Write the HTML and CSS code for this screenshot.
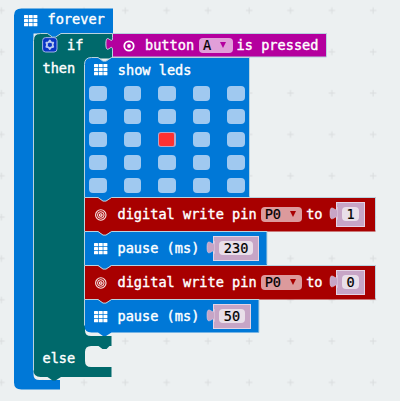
FILE: index.html
```html
<!DOCTYPE html>
<html lang="en">
<head>
<meta charset="utf-8">
<title>Block editor</title>
<link rel="stylesheet" href="styles.css">
</head>
<body>
<svg class="defs" width="0" height="0" aria-hidden="true">
  <defs>
    <g id="grid-icon" fill="#fff">
      <rect x="0" y="0" width="4" height="3.2" rx=".5"/><rect x="4.7" y="0" width="4" height="3.2" rx=".5"/><rect x="9.4" y="0" width="4" height="3.2" rx=".5"/>
      <rect x="0" y="4" width="4" height="3.2" rx=".5"/><rect x="4.7" y="4" width="4" height="3.2" rx=".5"/><rect x="9.4" y="4" width="4" height="3.2" rx=".5"/>
      <rect x="0" y="8" width="4" height="3.2" rx=".5"/><rect x="4.7" y="8" width="4" height="3.2" rx=".5"/><rect x="9.4" y="8" width="4" height="3.2" rx=".5"/>
    </g>
    <g id="pin-icon" fill="none" stroke="#fff">
      <circle cx="6" cy="6" r="5.2" stroke-width="1.1" opacity=".9"/><circle cx="6" cy="6" r="3.3" stroke-width="1" opacity=".9"/><circle cx="6" cy="6" r="1.3" stroke-width="1.1"/>
    </g>
    <path id="plug" d="M8.500 4.200C8.500 12.500 1 -2.400 1 10.400S8.500 8.300 8.500 16.600Z"/>
    <pattern id="crosses" x="-19.4" y="-10.2" width="41.3" height="41.33" patternUnits="userSpaceOnUse">
      <path d="M17.5 20.7H24.1M20.8 17.4V24" stroke="#d9dcde" stroke-width="1"/>
    </pattern>
  </defs>
</svg>
<main class="workspace">
  <svg class="backdrop" width="400" height="401"><rect width="400" height="401" fill="url(#crosses)"/></svg>

  <section class="block forever">
    <svg class="shape"><path fill="#0078d7" d="M-.5 7Q-.5 0 7 0H98.500V25H19V366Q19 371.500 25 371.500H45.500V381H7Q-.5 381 -.5 374Z"/></svg>
    <header class="row forever-head">
      <svg class="icon" width="14" height="12"><use href="#grid-icon"/></svg>
      <span class="label">forever</span>
    </header>

    <section class="block if">
      <svg class="shape">
        <path fill="#0078d7" d="M7 -1H79V5H7Z"/>
        <path fill="#00696b" d="M0 7Q0 0 7 0H14L19 3.600H22L27.500 0H79V4.200C79 12.500 72.400 -2.100 72.400 10.400S79 8.300 79 16.600V25H57Q51.500 25 51.500 31V297Q51.500 302.500 57.500 302.500H78V312.500H76L73 315.500H69L65 312.500H57.500Q51.500 312.500 51.500 318.500V327.500Q51.500 333.500 57.500 333.500H78V343.500H27.500L22 347H19L14 343.500H7Q0 343.500 0 337Z"/>
        <path class="edge" d="M0 337V7Q0 0 7 0H14L19 3.600H22L27.500 0H79"/>
      </svg>
      <header class="row if-head">
        <svg class="gear" width="16" height="16" viewBox="0 0 16 16">
          <rect x=".6" y=".6" width="14.400" height="14.400" rx="3" fill="#0a35c6" stroke="#9fb4e6"/>
          <path fill="none" stroke="#b9c9ef" stroke-width="1.900" stroke-linejoin="round" d="M7.800 3.600L9 5.400L11.200 5.700L10.500 7.800L11.200 9.900L9 10.200L7.800 12L6.600 10.200L4.400 9.900L5.100 7.800L4.400 5.700L6.600 5.400Z"/>
          <circle cx="7.800" cy="7.800" r="1.900" fill="#0a35c6"/>
        </svg>
        <span class="label">if</span>
        <div class="condition">
          <svg class="shape"><path fill="#b4009e" d="M0 0H214V23.500H0V16.600C0 8.300 -6.600 22.900 -6.600 10.400S0 12.500 0 4.200Z"/><path class="edge" d="M214 0V23.500H0V16.600C0 8.300 -6.600 22.900 -6.600 10.400S0 12.500 0 4.200V0H214"/></svg>
          <svg class="icon" width="12" height="12"><circle cx="6" cy="6" r="4.700" fill="none" stroke="#fff" stroke-width="1.800"/><circle cx="6" cy="6" r="1.900" fill="#fff"/></svg>
          <span class="label">button</span>
          <span class="pick pick-button">A<i></i></span>
          <span class="label">is pressed</span>
        </div>
      </header>

      <div class="branch">
        <span class="label branch-name">then</span>
        <div class="stack">
          <section class="block leds">
            <svg class="shape"><path fill="#0078d7" d="M0 7Q0 0 7 0H13.500L18.500 3.600H21.500L27 0H165V140H27L21.500 143.500H18.500L13.500 140H0Z"/><path class="edge" d="M0 140V7Q0 0 7 0H13.500L18.500 3.600H21.500L27 0H165V139"/></svg>
            <header class="row"><svg class="icon" width="14" height="12"><use href="#grid-icon"/></svg><span class="label">show leds</span></header>
            <div class="matrix">
              <b></b><b></b><b></b><b></b><b></b>
              <b></b><b></b><b></b><b></b><b></b>
              <b></b><b></b><b class="on"></b><b></b><b></b>
              <b></b><b></b><b></b><b></b><b></b>
              <b></b><b></b><b></b><b></b><b></b>
            </div>
          </section>

          <section class="block row write">
            <svg class="shape"><path fill="#a80000" d="M0 0H13.500L18.500 3.600H21.500L27 0H291V34H27L21.500 37.500H18.500L13.500 34H0Z"/><path class="edge" d="M0 34V0H13.500L18.500 3.600H21.500L27 0H291V33"/></svg>
            <svg class="icon" width="14" height="12"><use href="#pin-icon" x=".8"/></svg>
            <span class="label">digital write pin</span>
            <span class="pick pick-pin">P0<i></i></span>
            <span class="label">to</span>
            <span class="value"><svg class="plug" width="9" height="22"><use href="#plug"/></svg><em>1</em></span>
          </section>

          <section class="block row pause">
            <svg class="shape"><path fill="#0078d7" d="M0 0H13.500L18.500 3.600H21.500L27 0H182.500V33.500H27L21.500 37.500H18.500L13.500 33.500H0Z"/><path class="edge" d="M0 34V0H13.500L18.500 3.600H21.500L27 0H182.500V33"/></svg>
            <svg class="icon" width="14" height="12"><use href="#grid-icon"/></svg>
            <span class="label">pause (ms)</span>
            <span class="value"><svg class="plug" width="9" height="22"><use href="#plug"/></svg><em>230</em></span>
          </section>

          <section class="block row write">
            <svg class="shape"><path fill="#a80000" d="M0 0H13.500L18.500 3.600H21.500L27 0H291V34H27L21.500 37.500H18.500L13.500 34H0Z"/><path class="edge" d="M0 34V0H13.500L18.500 3.600H21.500L27 0H291V33"/></svg>
            <svg class="icon" width="14" height="12"><use href="#pin-icon" x=".8"/></svg>
            <span class="label">digital write pin</span>
            <span class="pick pick-pin">P0<i></i></span>
            <span class="label">to</span>
            <span class="value"><svg class="plug" width="9" height="22"><use href="#plug"/></svg><em>0</em></span>
          </section>

          <section class="block row pause">
            <svg class="shape"><path fill="#0078d7" d="M0 0H13.500L18.500 3.600H21.500L27 0H174.500V33H27L21.500 36.500H18.500L13.500 33H7Q0 33 0 26Z"/><path class="edge" d="M0 26V0H13.500L18.500 3.600H21.500L27 0H174.500V33"/></svg>
            <svg class="icon" width="14" height="12"><use href="#grid-icon"/></svg>
            <span class="label">pause (ms)</span>
            <span class="value"><svg class="plug" width="9" height="22"><use href="#plug"/></svg><em>50</em></span>
          </section>
        </div>
      </div>
      <div class="otherwise"><span class="label">else</span></div>
    </section>
  </section>
</main>
</body>
</html>
```
FILE: styles.css
```css
* { box-sizing: border-box; }

body {
  margin: 0;
  background: #ecf0f1;
  color: #fff;
  font: 13.6px/16px "DejaVu Sans Mono", monospace;
}

.defs { display: block; height: 0; }

.workspace {
  position: relative;
  width: 400px;
  height: 401px;
  overflow: hidden;
  padding: 8px 0 0 14px;
}

.backdrop { position: absolute; inset: 0; }

.block { position: relative; }

.shape {
  position: absolute;
  top: 0;
  left: 0;
  width: 100%;
  height: 100%;
  overflow: visible;
}
/* centres one-pixel outlines on the pixel grid */
.shape path { transform: translate(.5px, .5px); }

.edge { fill: none; stroke: #b9d3df; stroke-width: 1; }

.row { display: flex; align-items: center; }

.label {
  position: relative;
  white-space: pre;
  -webkit-text-stroke: .4px #fff;
}

.icon { position: relative; flex: none; }

.forever { width: 98.500px; height: 381px; }
.forever-head { height: 25px; padding: 0 0 3px 9.700px; gap: 9.800px; }
.forever-head .icon { top: 2px; }

.if { margin-left: 19px; width: 79px; height: 344px; }
.if-head { height: 24px; padding-left: 9px; width: 294px; }
.gear { position: relative; flex: none; margin-right: 9px; }
.if-head > .label { width: 37px; }

.condition {
  position: relative;
  display: flex;
  align-items: center;
  flex: none;
  margin-left: 8px;
  width: 214px;
  height: 24px;
  padding-left: 11px;
}
.condition .icon { margin-right: 10px; top: .8px; }

.pick {
  position: relative;
  display: flex;
  align-items: center;
  height: 15px;
  border-radius: 4px;
  color: #000;
  flex: none;
  -webkit-text-stroke: .2px #000;
}
.pick i {
  border: 3px solid transparent;
  border-top: 6px solid #b4009e;
  border-bottom: 0;
}
.pick-button { width: 33.500px; margin: 0 4px 0 5px; padding-left: 4px; gap: 9px; background: #e19fd9; }
.pick-pin { width: 41.500px; margin: 0 4px 0 4px; padding-left: 4px; gap: 9px; background: #dc9a9c; }
.pick-pin i { border-top-color: #a80000; }

.branch { display: flex; width: 343px; height: 279px; }
.branch-name { width: 41.500px; margin: 3px 0 0 9.500px; flex: none; }

.leds { width: 165px; height: 140px; }
.leds .row { height: 24px; padding: 1px 0 0 10px; gap: 9.800px; }
.matrix {
  position: relative;
  display: grid;
  grid-template-columns: repeat(5, 17.500px);
  grid-auto-rows: 15px;
  gap: 8px 17px;
  padding: 5px 0 0 5px;
}
.matrix b { border-radius: 4px; background: #a0c9f0; }
.matrix .on { background: #ff3030; border: 1px solid #b9a5c8; border-right-width: 2px; border-radius: 3px; }

.write, .pause { height: 34px; padding-left: 10px; }
.write { width: 291px; }
.pause { width: 183px; }
.write > .icon, .pause > .icon { margin-right: 9.500px; top: 1px; }

.value {
  position: relative;
  display: flex;
  align-items: center;
  flex: none;
  height: 25px;
  margin-left: 13.500px;
  padding: 0 5px;
  background: #c7a5c6;
  border: 1px solid #e4d3e4;
}
.pause .value { margin-left: 14px; }
.plug { position: absolute; left: -8px; top: 0; fill: #c7a5c6; stroke: #dfc9df; stroke-width: .6; }
.value em {
  height: 14.500px;
  line-height: 14.500px;
  padding: 0 4.500px;
  border-radius: 4px;
  background: #e9dfe9;
  color: #000;
  font-style: normal;
  -webkit-text-stroke: .2px #000;
}

.otherwise { padding: 13.500px 0 0 9.500px; }
```
